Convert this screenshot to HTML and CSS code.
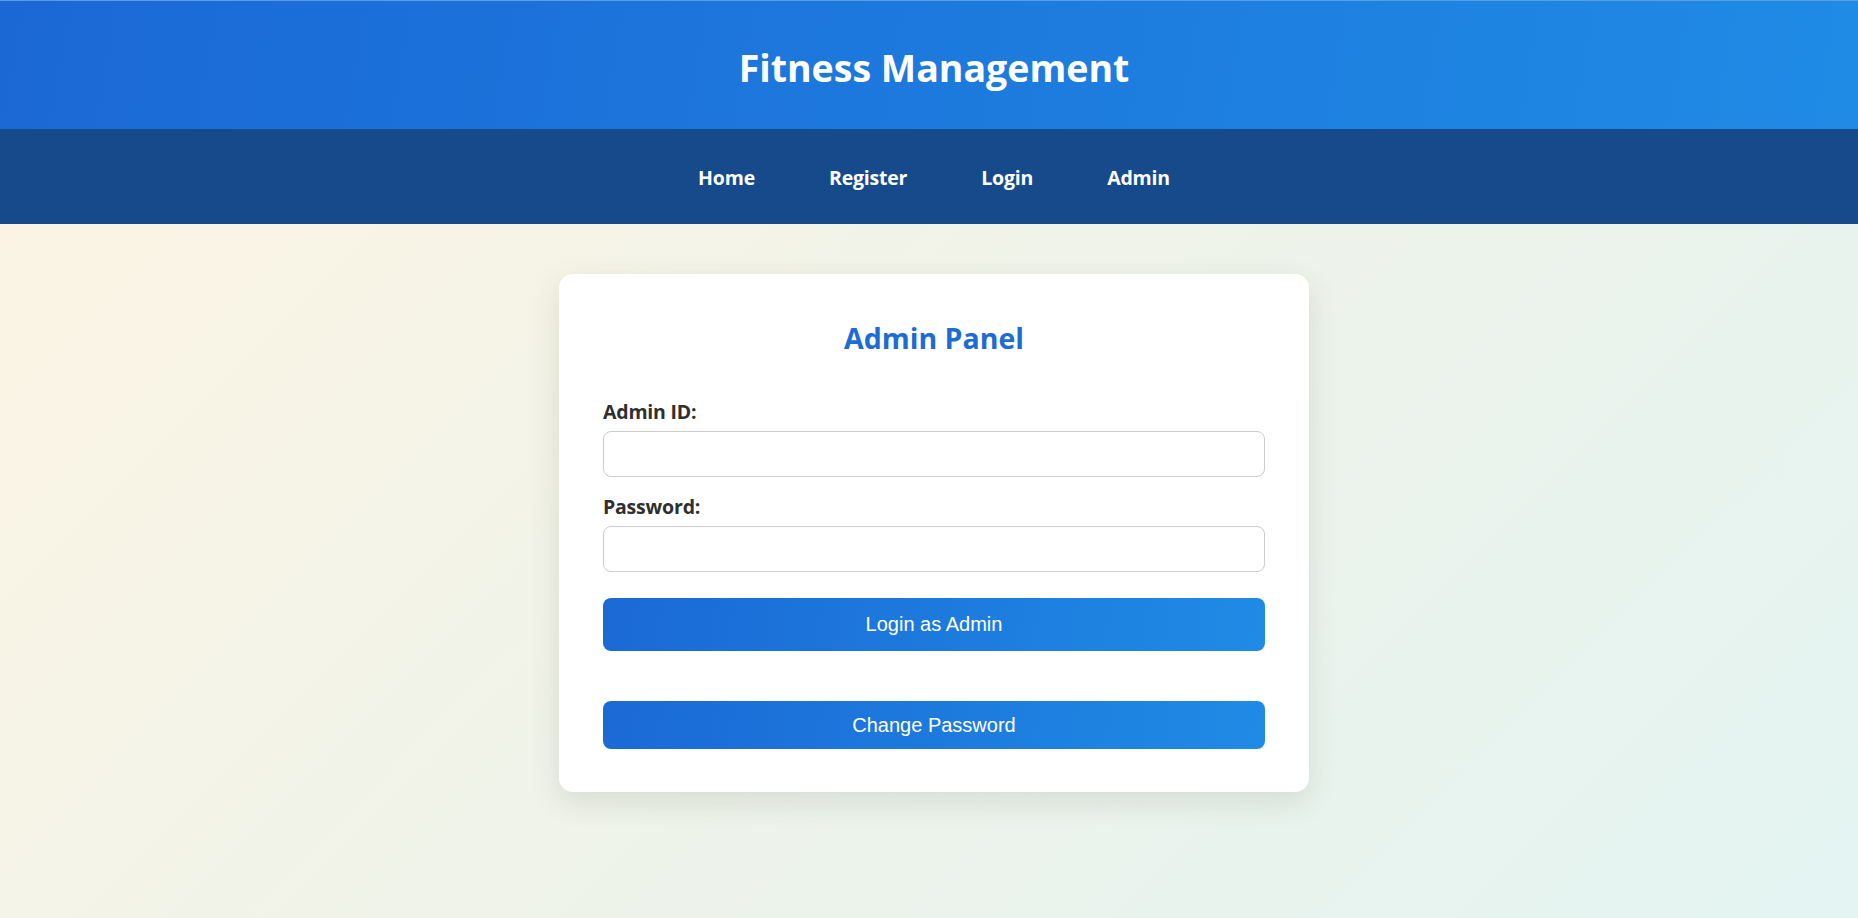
FILE: index.html
```html
<!DOCTYPE html>
<html lang="en">
<head>
<meta charset="utf-8">
<title>Fitness Management - Admin</title>
<link rel="stylesheet" href="styles.css">
</head>
<body>
  <header class="site-header">
    <h1 class="site-title">Fitness Management</h1>
  </header>
  <nav class="site-nav">
    <ul class="nav-list">
      <li><a href="#" class="nav-link">Home</a></li>
      <li><a href="#" class="nav-link">Register</a></li>
      <li><a href="#" class="nav-link">Login</a></li>
      <li><a href="#" class="nav-link">Admin</a></li>
    </ul>
  </nav>
  <main class="page">
    <section class="card">
      <h2 class="card-title">Admin Panel</h2>
      <form class="form">
        <label class="field-label" for="admin-id">Admin ID:</label>
        <input class="field-input" id="admin-id" type="text">
        <label class="field-label field-label-2" for="admin-pass">Password:</label>
        <input class="field-input" id="admin-pass" type="password">
        <button type="button" class="btn btn-login">Login as Admin</button>
      </form>
      <button type="button" class="btn btn-change">Change Password</button>
    </section>
  </main>
</body>
</html>
```

FILE: styles.css
```css
* { box-sizing: border-box; }

html, body {
  margin: 0;
  padding: 0;
}

body {
  min-height: 918px;
  font-family: "Open Sans", "Noto Sans", sans-serif;
  background: linear-gradient(135deg, #fdf4e3 0%, #eef3ea 55%, #e3f4f2 100%);
  color: #333;
}

.site-header {
  height: 129px;
  display: flex;
  align-items: center;
  justify-content: center;
  padding-left: 10px;
  background: linear-gradient(100deg, #1b68d5 0%, #1f8be5 100%);
  border-top: 1px solid #5a9ce6;
}

.site-title {
  margin: 0;
  padding-top: 5px;
  color: #fff;
  font-size: 37.5px;
  font-weight: 700;
  letter-spacing: 0;
  line-height: 1;
}

.site-nav {
  height: 95px;
  background: #174a8b;
  display: flex;
  align-items: center;
  justify-content: center;
  padding-left: 10px;
}

.nav-list {
  list-style: none;
  margin: 0;
  padding: 2px 0 0 0;
  display: flex;
  gap: 74px;
}

.nav-link {
  color: #fff;
  text-decoration: none;
  font-weight: 700;
  font-size: 19.5px;
  letter-spacing: -0.2px;
}

.page {
  display: flex;
  justify-content: center;
  padding-top: 50px;
  padding-bottom: 40px;
  padding-left: 10px;
}

.card {
  width: 750px;
  background: #fff;
  border-radius: 14px;
  padding: 47px 44px 43px;
  box-shadow: 0 10px 30px rgba(60, 70, 50, 0.13);
  display: flex;
  flex-direction: column;
}

.card-title {
  margin: 0;
  text-align: center;
  color: #1c6bd6;
  font-size: 28.5px;
  line-height: 34px;
  font-weight: 700;
  letter-spacing: 0;
}

.form {
  display: flex;
  flex-direction: column;
  margin-top: 45px;
}

.field-label {
  font-size: 19.5px;
  font-weight: 700;
  line-height: 24px;
  color: #2f2f2f;
  letter-spacing: -0.2px;
}

.field-label-2 {
  margin-top: 18px;
}

.field-input {
  margin-top: 7px;
  height: 46px;
  width: 100%;
  border: 1px solid #cccccc;
  border-radius: 8px;
  background: #fff;
  font-size: 16px;
  padding: 0 12px;
}

.btn {
  width: 100%;
  border: none;
  border-radius: 8px;
  color: #fff;
  font-family: "Liberation Sans", Arial, sans-serif;
  font-size: 20px;
  background: linear-gradient(100deg, #1b69d5 0%, #1f8be5 100%);
  cursor: pointer;
}

.btn-login {
  margin-top: 26px;
  height: 53px;
}

.btn-change {
  margin-top: 50px;
  height: 48px;
}
```
